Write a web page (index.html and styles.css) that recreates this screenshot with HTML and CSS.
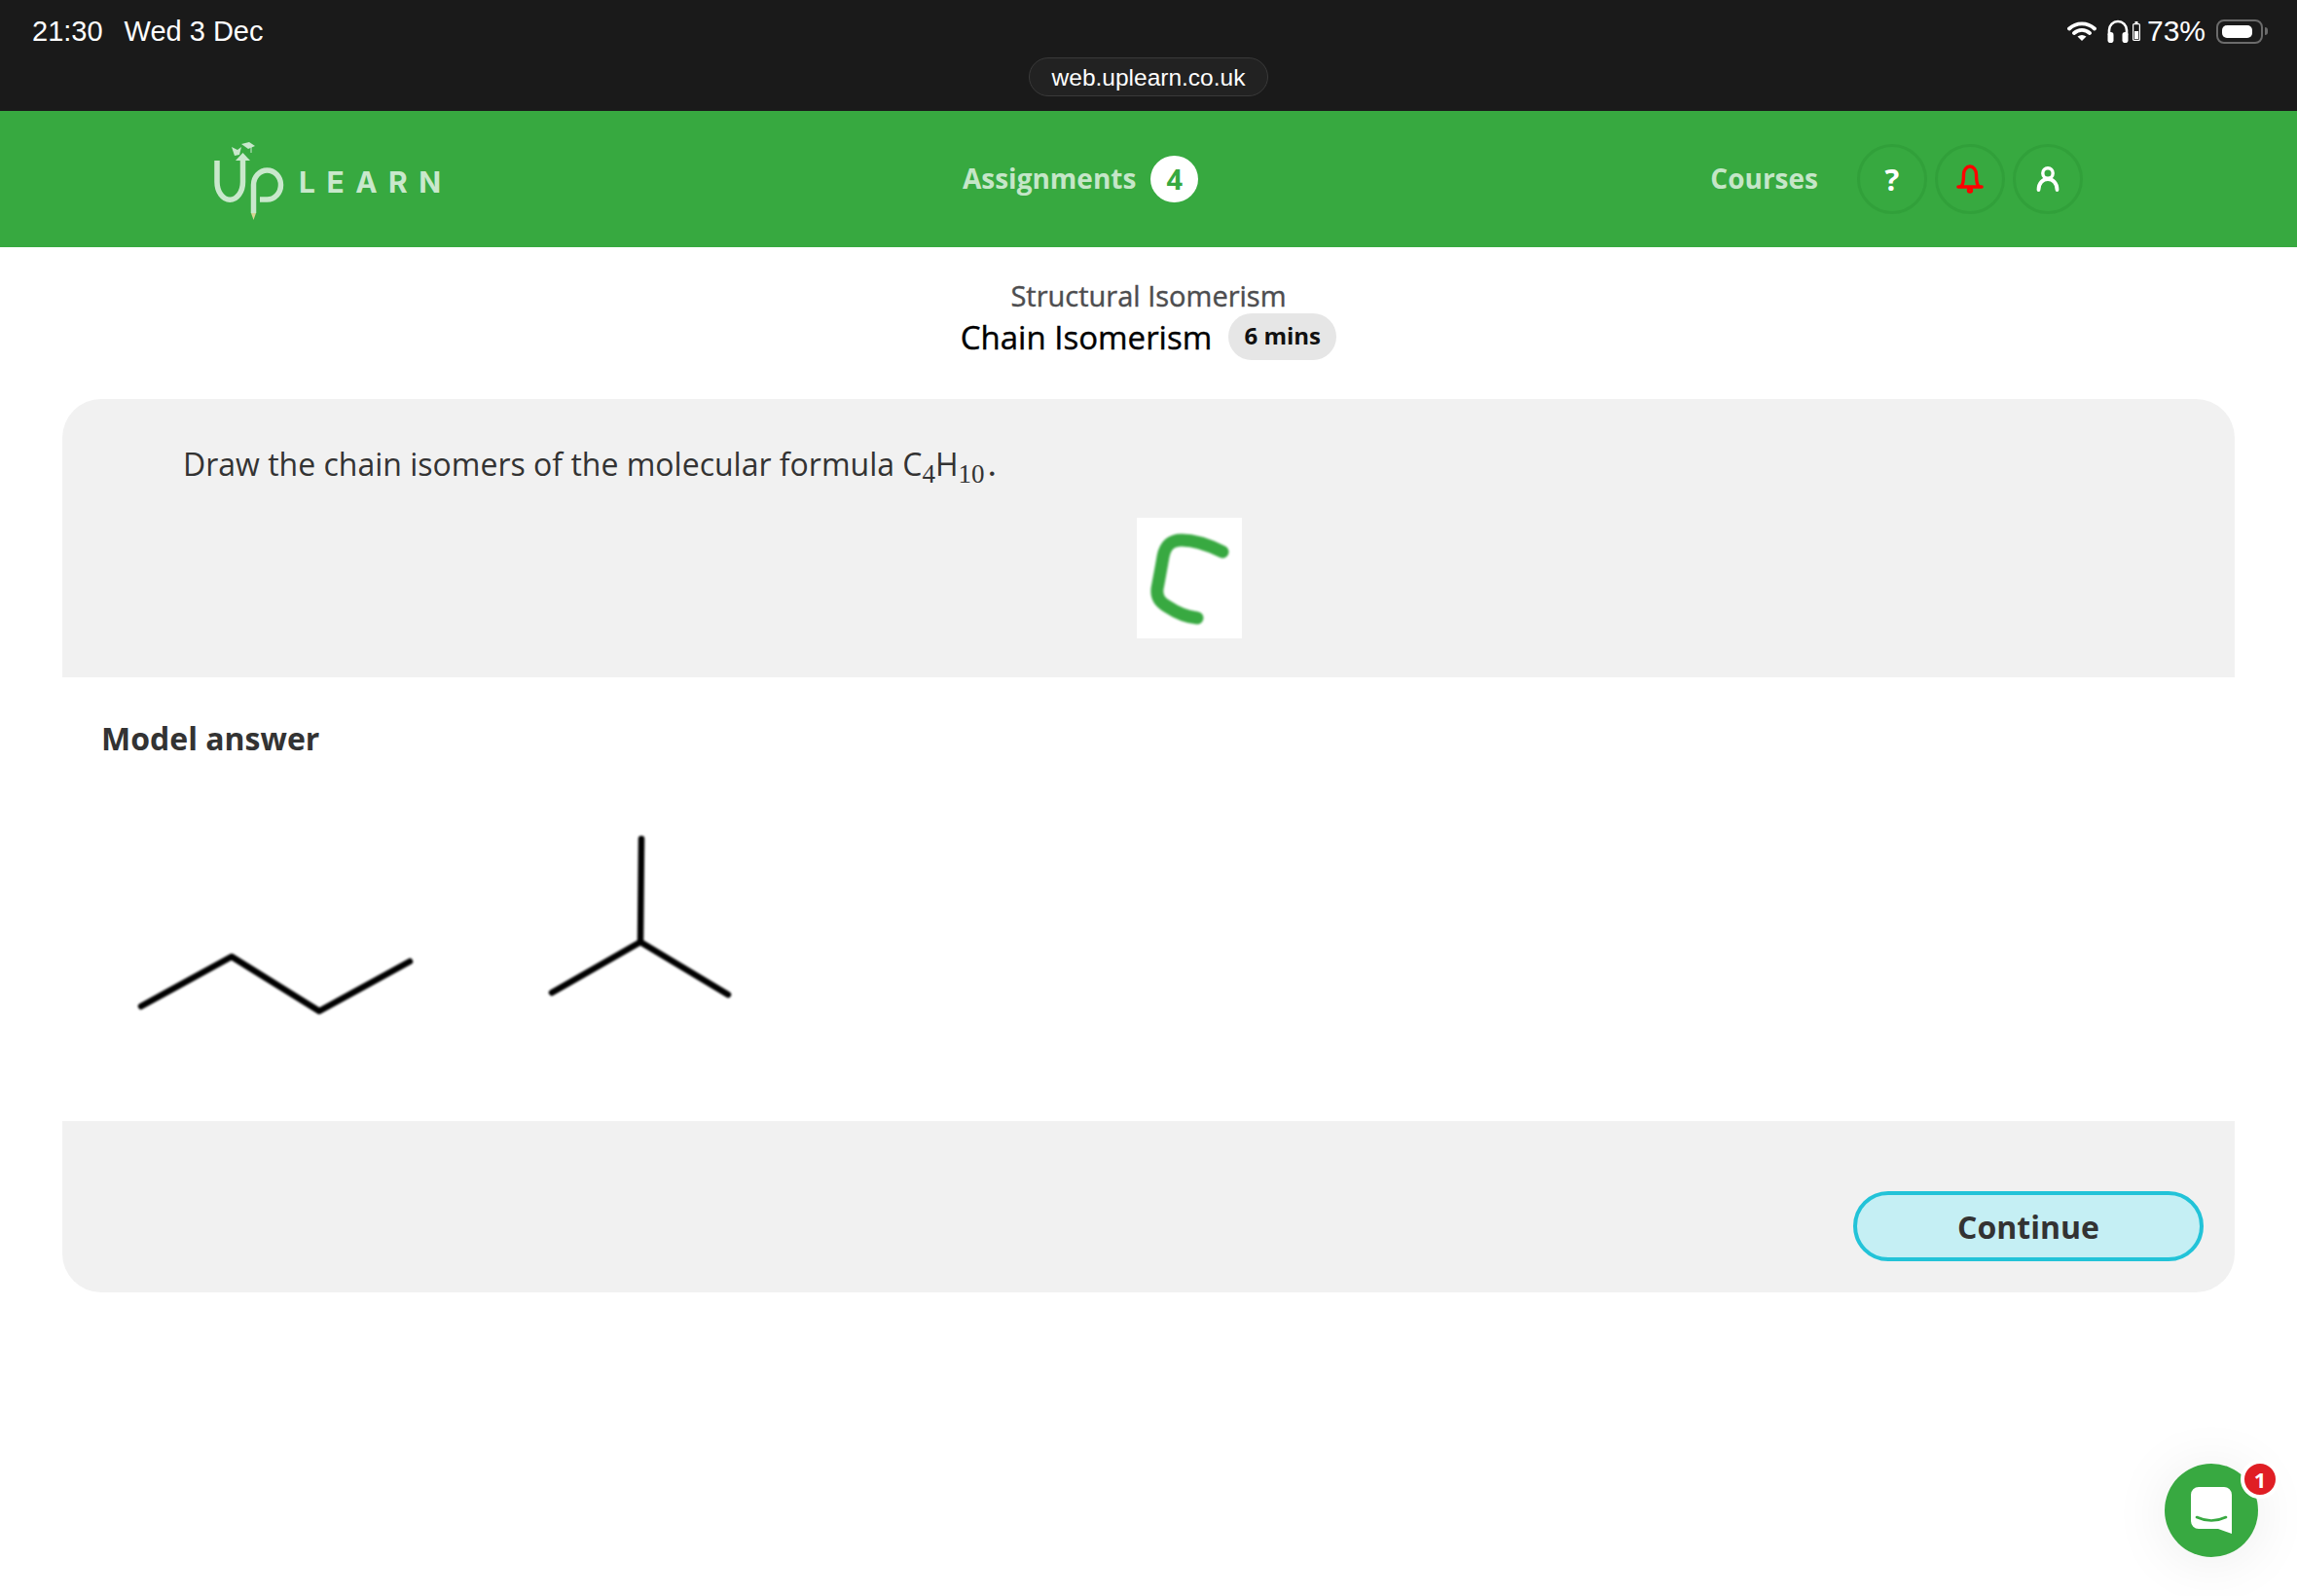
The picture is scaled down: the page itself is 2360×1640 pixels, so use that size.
FILE: index.html
```html
<!DOCTYPE html>
<html lang="en">
<head>
    <meta charset="UTF-8">
    <meta name="viewport" content="width=device-width, initial-scale=1.0">
    <title>Chain Isomerism</title>
    <link rel="stylesheet" href="styles.css">
</head>
<body>
    <div class="statusbar">
        <div class="status-row">
            <div class="clock"><span>21:30</span><span>Wed 3 Dec</span></div>
            <div class="status-icons">
                <svg class="wifi" width="30" height="20" viewBox="0 0 30 20">
                    <path d="M2 7.500A19 19 0 0 1 28 7.500M7 12A12 12 0 0 1 23 12" fill="none" stroke="#fff" stroke-width="3.800" stroke-linecap="round"/>
                    <path d="M10.500 15.500Q15 12.500 19.500 15.500L15 20Z" fill="#fff"/>
                </svg>
                <svg class="phones" width="24" height="24" viewBox="0 0 24 24">
                    <path d="M3 16V11A9 9 0 0 1 21 11V16" fill="none" stroke="#fff" stroke-width="2.600"/>
                    <rect x="1.500" y="13" width="6" height="11" rx="2.800" fill="#fff"/>
                    <rect x="16.500" y="13" width="6" height="11" rx="2.800" fill="#fff"/>
                </svg>
                <svg class="mini-batt" width="8" height="20" viewBox="0 0 8 20">
                    <rect x="2.500" y="0" width="3" height="2" fill="#fff"/>
                    <rect x="0.600" y="2.600" width="6.800" height="16.800" rx="1" fill="none" stroke="#fff" stroke-width="1.200"/>
                    <rect x="2" y="10" width="4" height="8" fill="#fff"/>
                </svg>
                <span class="percent">73%</span>
                <div class="battery"><div class="battery-fill"></div></div>
                <div class="battery-nub"></div>
            </div>
        </div>
        <div class="url-pill">web.uplearn.co.uk</div>
    </div>

    <nav class="nav">
        <div class="logo">
            <svg class="logo-mark" width="85" height="90" viewBox="0 0 85 90">
                <path d="M3 19V41A13 18 0 0 0 29.500 41V18" fill="none" stroke="#c9e8cc" stroke-width="5.500"/>
                <path d="M22 19L29.500 11L37 19Z" fill="#c9e8cc"/>
                <path d="M40.500 73V44A14 15 0 1 1 54.500 59H47" fill="none" stroke="#c9e8cc" stroke-width="5.500"/>
                <path d="M38 73H43L40.500 80Z" fill="#d8d592"/>
                <path d="M18 5L24 8L28 5L26 13L21 14Z" fill="#c9e8cc"/>
                <path d="M28 2L36 0L42 4L35 7Z" fill="#c9e8cc"/>
                <path d="M38 5V11" stroke="#c9e8cc" stroke-width="1"/>
            </svg>
            <span class="logo-word">LEARN</span>
        </div>
        <div class="nav-mid">
            <a class="nav-link">Assignments</a>
            <span class="count">4</span>
        </div>
        <div class="nav-right">
            <a class="nav-link courses">Courses</a>
            <div class="round-btn help">?</div>
            <div class="round-btn">
                <svg width="28" height="30" viewBox="0 0 28 30" fill="none" stroke="#f00" stroke-linecap="round">
                    <path d="M2 23H26" stroke-width="3.600"/>
                    <path d="M5 22.500C7.500 20 7.500 15 7.500 10.500A6.500 8.500 0 0 1 20.500 10.500C20.500 15 20.500 20 23 22.500" stroke-width="3.400"/>
                    <circle cx="14" cy="26.500" r="1.800" stroke-width="2.800"/>
                </svg>
            </div>
            <div class="round-btn">
                <svg width="24" height="26" viewBox="0 0 24 26" fill="none" stroke="#fff" stroke-linecap="round">
                    <circle cx="12" cy="7" r="5.200" stroke-width="3.400"/>
                    <path d="M2.500 24C2.500 17 7 13 12 13C17 13 21.500 17 21.500 24" stroke-width="3.800"/>
                </svg>
            </div>
        </div>
    </nav>

    <header class="lesson-head">
        <div class="topic">Structural Isomerism</div>
        <div class="lesson-row">
            <h1 class="lesson-name">Chain Isomerism</h1>
            <span class="mins">6 mins</span>
        </div>
    </header>

    <main class="card">
        <section class="question">
            <p class="question-text">Draw the chain isomers of the molecular formula C<sub>4</sub>H<sub>10</sub><span class="dot">.</span></p>
            <div class="answer-img">
                <svg class="raster" width="108" height="124" viewBox="0 0 108 124">
                    <path d="M88 35C72 27 57 23 46 23C34 23 29 30 27 40C25 52 23 62 21 73C20 82 24 87 31 91C40 97 50 102 62 103" fill="none" stroke="#38a941" stroke-width="13" stroke-linecap="round" stroke-linejoin="round"/>
                </svg>
            </div>
        </section>

        <section class="model">
            <h2 class="model-title">Model answer</h2>
            <svg class="molecules raster" width="700" height="250" viewBox="0 0 700 250" fill="none" stroke="#000" stroke-width="6.500" stroke-linecap="round" stroke-linejoin="round">
                <path d="M45 204L138 153L228 209L321 158"/>
                <path d="M559 32L558 138M467 190L558 138L648 192"/>
            </svg>
        </section>

        <section class="card-foot">
            <button class="continue">Continue</button>
        </section>
    </main>

    <div class="chat">
        <svg width="42" height="48" viewBox="0 0 42 48">
            <path d="M8 0H34A8 8 0 0 1 42 8V48L28 43H8A8 8 0 0 1 0 35V8A8 8 0 0 1 8 0Z" fill="#fff"/>
            <path d="M6 31Q21 38 36 31" fill="none" stroke="#38a941" stroke-width="2.600" stroke-linecap="round"/>
        </svg>
        <span class="chat-badge">1</span>
    </div>
</body>
</html>
```

FILE: styles.css
```css
* {
    box-sizing: border-box;
}
body {
    margin: 0;
    height: 1640px;
    position: relative;
    overflow: hidden;
    background: #fff;
    font-family: "Open Sans", sans-serif;
}

/* ipad status bar */
.statusbar {
    height: 114px;
    background: #1a1a1a;
    color: #fff;
    font-family: "Liberation Sans", sans-serif;
    position: relative;
}
.status-row {
    display: flex;
    justify-content: space-between;
    padding: 15px 30px 0 33px;
}
.clock {
    display: flex;
    gap: 22px;
    font-size: 29px;
    line-height: 34px;
}
.status-icons {
    display: flex;
    align-items: center;
    height: 34px;
}
.wifi { margin-right: 10px; }
.phones { margin-right: 3px; }
.mini-batt { margin-right: 7px; }
.percent {
    font-size: 30px;
    margin-right: 11px;
}
.battery {
    width: 48px;
    height: 25px;
    border: 2px solid #6b6b6b;
    border-radius: 8px;
    padding: 4px;
}
.battery-fill {
    width: 31px;
    height: 100%;
    background: #fff;
    border-radius: 5px;
}
.battery-nub {
    width: 3px;
    height: 8px;
    margin-left: 2px;
    background: #6b6b6b;
    border-radius: 0 3px 3px 0;
}
.url-pill {
    position: absolute;
    left: 1057px;
    top: 59px;
    width: 246px;
    height: 40px;
    line-height: 39px;
    text-align: center;
    font-size: 24.500px;
    background: #222;
    border: 1px solid #3a3a3a;
    border-radius: 20px;
}

/* green nav */
.nav {
    height: 140px;
    background: #37a940;
    display: flex;
    justify-content: space-between;
    align-items: center;
    padding: 0 220px;
}
.logo {
    width: 243px;
    display: flex;
    align-items: flex-start;
    margin-top: 13px;
}
.logo-mark {
    flex: none;
}
.logo-word {
    flex: none;
    font-family: "Inter", sans-serif;
    font-weight: 700;
    font-size: 30px;
    letter-spacing: 11.500px;
    color: #c9e8cc;
    margin: 23px 0 0 2px;
}
.nav-mid {
    display: flex;
    align-items: center;
    gap: 15px;
}
.nav-link {
    font-size: 28px;
    font-weight: 700;
    color: #c5e6c8;
    margin-bottom: 2px;
}
.count {
    width: 49px;
    height: 48px;
    border-radius: 50%;
    background: #fff;
    color: #37a940;
    font-size: 29px;
    font-weight: 700;
    line-height: 48px;
    text-align: center;
}
.nav-right {
    display: flex;
    align-items: center;
    gap: 8px;
}
.courses { margin-right: 32px; }
.round-btn {
    width: 72px;
    height: 72px;
    border: 3px solid #31a03a;
    border-radius: 50%;
    display: flex;
    justify-content: center;
    align-items: center;
}
.help {
    color: #fff;
    font-size: 31px;
    font-weight: 700;
}

/* lesson title */
.lesson-head {
    height: 156px;
    padding-top: 30px;
    text-align: center;
}
.topic {
    font-size: 29px;
    line-height: 39px;
    color: #4d4d4f;
    -webkit-text-stroke: 0.4px #4d4d4f;
}
.lesson-row {
    display: flex;
    justify-content: center;
    align-items: center;
    gap: 17px;
    height: 48px;
    margin-top: -1px;
}
.lesson-name {
    margin: 0;
    font-size: 33px;
    font-weight: 400;
    color: #000;
    -webkit-text-stroke: 0.4px #000;
}
.mins {
    width: 111px;
    height: 48px;
    line-height: 46px;
    border-radius: 24px;
    background: #e6e6e6;
    color: #111;
    font-size: 24px;
    font-weight: 700;
}

/* main card */
.card {
    margin: 0 64px;
}
.question {
    height: 286px;
    background: #f1f1f1;
    border-radius: 40px 40px 0 0;
    padding: 44px 42px 0 126px;
}
.question-text {
    margin: 0 0 0 -2px;
    height: 78px;
    font-size: 32px;
    line-height: 46px;
    color: #333;
}
.question-text sub {
    font-family: "Liberation Serif", serif;
    font-size: 27px;
    line-height: 0;
    vertical-align: -7px;
}
.dot {
    font-family: "Liberation Serif", serif;
    font-size: 38px;
    line-height: 0;
    margin-left: 3px;
}
.answer-img {
    width: 108px;
    height: 124px;
    margin: 0 auto;
    background: #fff;
}
.raster {
    filter: blur(0.8px);
}
.model {
    height: 456px;
    padding: 40px 0 0 36px;
    position: relative;
}
.model-title {
    margin: 0 0 0 4px;
    font-size: 32px;
    line-height: 45px;
    font-weight: 700;
    color: #333;
}
.molecules {
    display: block;
    margin-top: 49px;
}
.card-foot {
    height: 176px;
    background: #f1f1f1;
    border-radius: 0 0 40px 40px;
    padding: 72px 32px 0 0;
    display: flex;
    justify-content: flex-end;
}
.continue {
    width: 360px;
    height: 72px;
    border: 4px solid #22c3d8;
    border-radius: 36px;
    background: #c5eff4;
    color: #333;
    font-family: "Open Sans", sans-serif;
    font-size: 32px;
    font-weight: 700;
}

/* chat launcher */
.chat {
    position: absolute;
    right: 40px;
    bottom: 40px;
    width: 96px;
    height: 96px;
    border-radius: 50%;
    background: #38a941;
    box-shadow: 0 4px 60px rgba(0, 0, 0, 0.08);
    display: flex;
    justify-content: center;
    align-items: center;
}
.chat-badge {
    position: absolute;
    top: -4px;
    right: -22px;
    width: 40px;
    height: 40px;
    border: 4px solid #fff;
    border-radius: 50%;
    background: #e01e24;
    color: #fff;
    font-size: 22px;
    font-weight: 700;
    line-height: 32px;
    text-align: center;
}
```
